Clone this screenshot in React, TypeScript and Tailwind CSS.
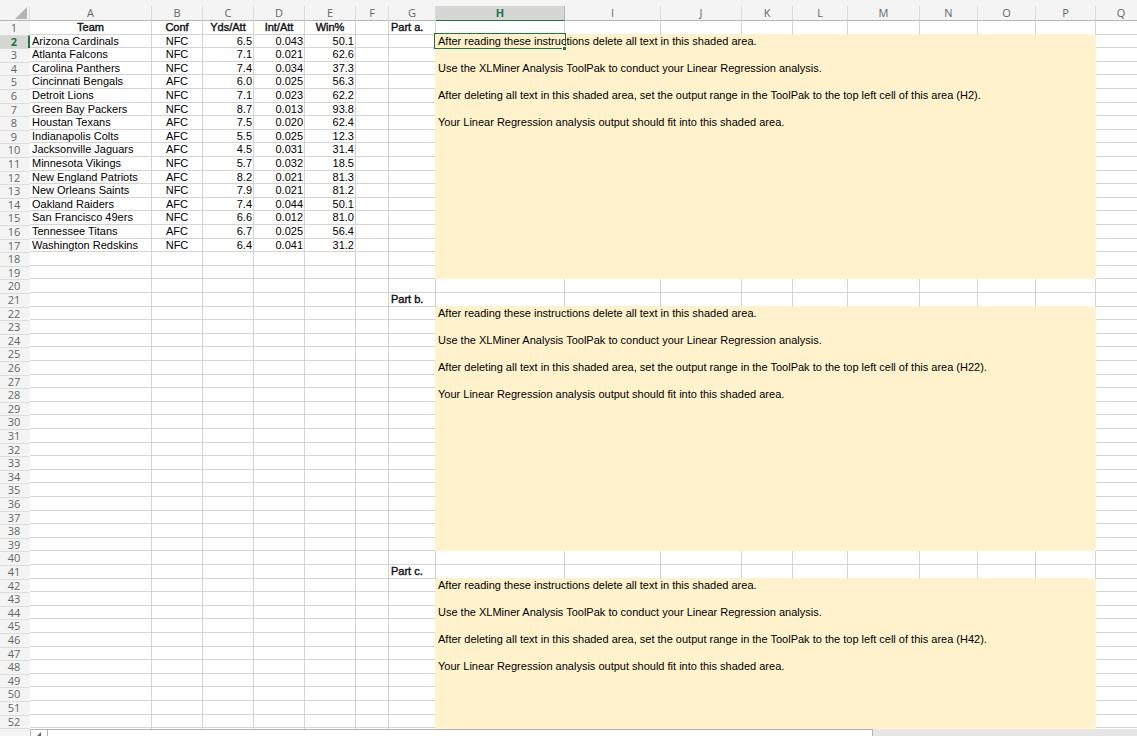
import React from "react";

type Team = [string, string, string, string, string];

const teams: Team[] = [
  ["Arizona Cardinals", "NFC", "6.5", "0.043", "50.1"],
  ["Atlanta Falcons", "NFC", "7.1", "0.021", "62.6"],
  ["Carolina Panthers", "NFC", "7.4", "0.034", "37.3"],
  ["Cincinnati Bengals", "AFC", "6.0", "0.025", "56.3"],
  ["Detroit Lions", "NFC", "7.1", "0.023", "62.2"],
  ["Green Bay Packers", "NFC", "8.7", "0.013", "93.8"],
  ["Houstan Texans", "AFC", "7.5", "0.020", "62.4"],
  ["Indianapolis Colts", "AFC", "5.5", "0.025", "12.3"],
  ["Jacksonville Jaguars", "AFC", "4.5", "0.031", "31.4"],
  ["Minnesota Vikings", "NFC", "5.7", "0.032", "18.5"],
  ["New England Patriots", "AFC", "8.2", "0.021", "81.3"],
  ["New Orleans Saints", "NFC", "7.9", "0.021", "81.2"],
  ["Oakland Raiders", "AFC", "7.4", "0.044", "50.1"],
  ["San Francisco 49ers", "NFC", "6.6", "0.012", "81.0"],
  ["Tennessee Titans", "AFC", "6.7", "0.025", "56.4"],
  ["Washington Redskins", "NFC", "6.4", "0.041", "31.2"],
];

const columns = [
  { name: "A", width: "w-[122px]" },
  { name: "B", width: "w-[51px]" },
  { name: "C", width: "w-[51px]" },
  { name: "D", width: "w-[51px]" },
  { name: "E", width: "w-[51px]" },
  { name: "F", width: "w-[33px]" },
  { name: "G", width: "w-[47px]" },
  { name: "H", width: "w-[129px]" },
  { name: "I", width: "w-[96px]" },
  { name: "J", width: "w-[81px]" },
  { name: "K", width: "w-[51px]" },
  { name: "L", width: "w-[55px]" },
  { name: "M", width: "w-[72px]" },
  { name: "N", width: "w-[58px]" },
  { name: "O", width: "w-[58px]" },
  { name: "P", width: "w-[60px]" },
  { name: "Q", width: "" },
];

const cells: Record<string, string> = {
  A1: "Team",
  B1: "Conf",
  C1: "Yds/Att",
  D1: "Int/Att",
  E1: "Win%",
  G1: "Part a.",
  G21: "Part b.",
  G41: "Part c.",
};

teams.forEach((team, i) => {
  team.forEach((value, c) => {
    cells["ABCDE"[c] + (i + 2)] = value;
  });
});

[2, 22, 42].forEach((row) => {
  cells["H" + row] = "After reading these instructions delete all text in this shaded area.";
  cells["H" + (row + 2)] = "Use the XLMiner Analysis ToolPak to conduct your Linear Regression analysis.";
  cells["H" + (row + 4)] =
    `After deleting all text in this shaded area, set the output range in the ToolPak to the top left cell of this area (H${row}).`;
  cells["H" + (row + 6)] = "Your Linear Regression analysis output should fit into this shaded area.";
});

const LAST_ROW = 52;
const rowNumbers = Array.from({ length: LAST_ROW }, (_, i) => i + 1);

// Rows 2-19, 22-39 and 42 onwards are shaded in columns H to P.
const isShadedRow = (row: number) => row > 1 && row % 20 !== 0 && row % 20 !== 1;
const isShadedColumn = (name: string) => name >= "H" && name <= "P";

// Row heights average 13.6px, spread over whole pixels in groups of five.
const rowHeights = ["h-[14px]", "h-[13px]", "h-[14px]", "h-[13px]", "h-[14px]"];

function cellClass(name: string, row: number) {
  const inColumns = isShadedColumn(name);
  const shaded = inColumns && isShadedRow(row);
  const rightShaded = shaded || (name === "G" && isShadedRow(row));
  const bottomShaded = shaded || (inColumns && isShadedRow(row + 1));
  const out = ["border-r border-b p-0 align-top font-normal whitespace-nowrap"];
  out.push(shaded ? "bg-[#fff2cc]" : "bg-white");
  out.push(rightShaded ? "border-r-[#fff2cc]" : "border-r-[#d4d4d4]");
  out.push(bottomShaded ? "border-b-[#fff2cc]" : "border-b-[#d4d4d4]");
  if (name === "B" || (row === 1 && name < "F")) out.push("text-center");
  else if (name === "C" || name === "D" || name === "E") out.push("pr-px text-right");
  else out.push("pl-0.5 text-left");
  if (row === 1 || name === "G") out.push("[-webkit-text-stroke:0.4px_#222]");
  if (name === "H" && row === 2) out.push("relative z-10");
  return out.join(" ");
}

function ActiveCellFrame() {
  return (
    <span className="pointer-events-none absolute -top-0.5 -left-0.5 h-4 w-[132px] border border-[#217346]">
      <span className="absolute -right-px -bottom-0.5 size-1 border-t border-l border-white bg-[#217346]" />
    </span>
  );
}

function ColumnHeaders() {
  return (
    <tr className="h-[15px] leading-[14px] text-[#666]">
      <th className="border-r border-b border-r-[#dcdcdc] border-b-[#b5b5b5] bg-[#f4f4f4] p-0">
        <button type="button" aria-label="Select all" className="block h-[14px] w-full">
          <svg viewBox="0 0 29 14" className="h-[14px] w-full" aria-hidden="true">
            <path d="M27 1v12H15z" fill="#b5b5b5" />
          </svg>
        </button>
      </th>
      {columns.map(({ name }) => (
        <th
          key={name}
          scope="col"
          className={
            name === "H"
              ? "border-r border-b border-r-[#b5b5b5] border-b-[#217346] bg-[#d6d6d4] p-0 font-bold text-[#217346]"
              : "border-r border-b border-r-[#dcdcdc] border-b-[#b5b5b5] bg-[#f4f4f4] p-0 font-normal"
          }
        >
          {name}
        </th>
      ))}
    </tr>
  );
}

function SheetRow({ row }: { row: number }) {
  return (
    <tr className={rowHeights[(row - 1) % 5]}>
      <th
        scope="row"
        className={
          row === 2
            ? "border-t border-r-2 border-t-[#dcdcdc] border-r-[#217346] bg-[#d6d6d4] p-0 align-top font-bold text-[#217346]"
            : row === 1
              ? "border-t border-t-[#f4f4f4] bg-[#f4f4f4] p-0 pr-0.5 align-top font-normal text-[#666]"
              : "border-t border-t-[#dcdcdc] bg-[#f4f4f4] p-0 pr-0.5 align-top font-normal text-[#666]"
        }
      >
        {row}
      </th>
      {columns.map(({ name }) => {
        const Tag = row === 1 && name < "F" ? "th" : "td";
        return (
          <Tag key={name} className={cellClass(name, row) + " font-['Liberation_Sans',Arial,sans-serif] text-black"}>
            {cells[name + row]}
            {name === "H" && row === 2 && <ActiveCellFrame />}
          </Tag>
        );
      })}
    </tr>
  );
}

export default function App() {
  return (
    <div className="flex h-screen flex-col overflow-hidden bg-[#f4f4f4]">
      <main className="min-h-0 flex-1 overflow-hidden pt-1.5">
        <table className="w-full min-w-[1147px] table-fixed border-separate border-spacing-0 font-['Open_Sans','Noto_Sans',sans-serif] text-[11px] leading-[12px]">
          <colgroup>
            <col className="w-[30px]" />
            {columns.map(({ name, width }) => (
              <col key={name} className={width} />
            ))}
          </colgroup>
          <thead>
            <ColumnHeaders />
          </thead>
          <tbody>
            {rowNumbers.map((row) => (
              <SheetRow key={row} row={row} />
            ))}
            <tr className="h-[13px]">
              <td className="border-t border-t-[#dcdcdc] bg-[#f4f4f4] p-0" />
              {columns.map(({ name }) => (
                <td key={name} className={cellClass(name, LAST_ROW + 1)} />
              ))}
            </tr>
          </tbody>
        </table>
      </main>
      <div className="flex h-[7px] shrink-0 overflow-hidden bg-[#e6e6e6]">
        <div className="w-[30px] shrink-0 bg-[#f4f4f4]" />
        <button
          type="button"
          aria-label="Scroll left"
          className="flex w-[17px] shrink-0 justify-center border-t border-l border-[#b5b5b5] bg-white pt-0.5"
        >
          <svg viewBox="0 0 6 8" className="h-2 w-1.5" aria-hidden="true">
            <path d="M5 0v8L1 4z" fill="#666" />
          </svg>
        </button>
        <div className="flex-[826] border-t border-r border-l border-[#b5b5b5] bg-white" />
        <div className="flex-[264]" />
      </div>
    </div>
  );
}
